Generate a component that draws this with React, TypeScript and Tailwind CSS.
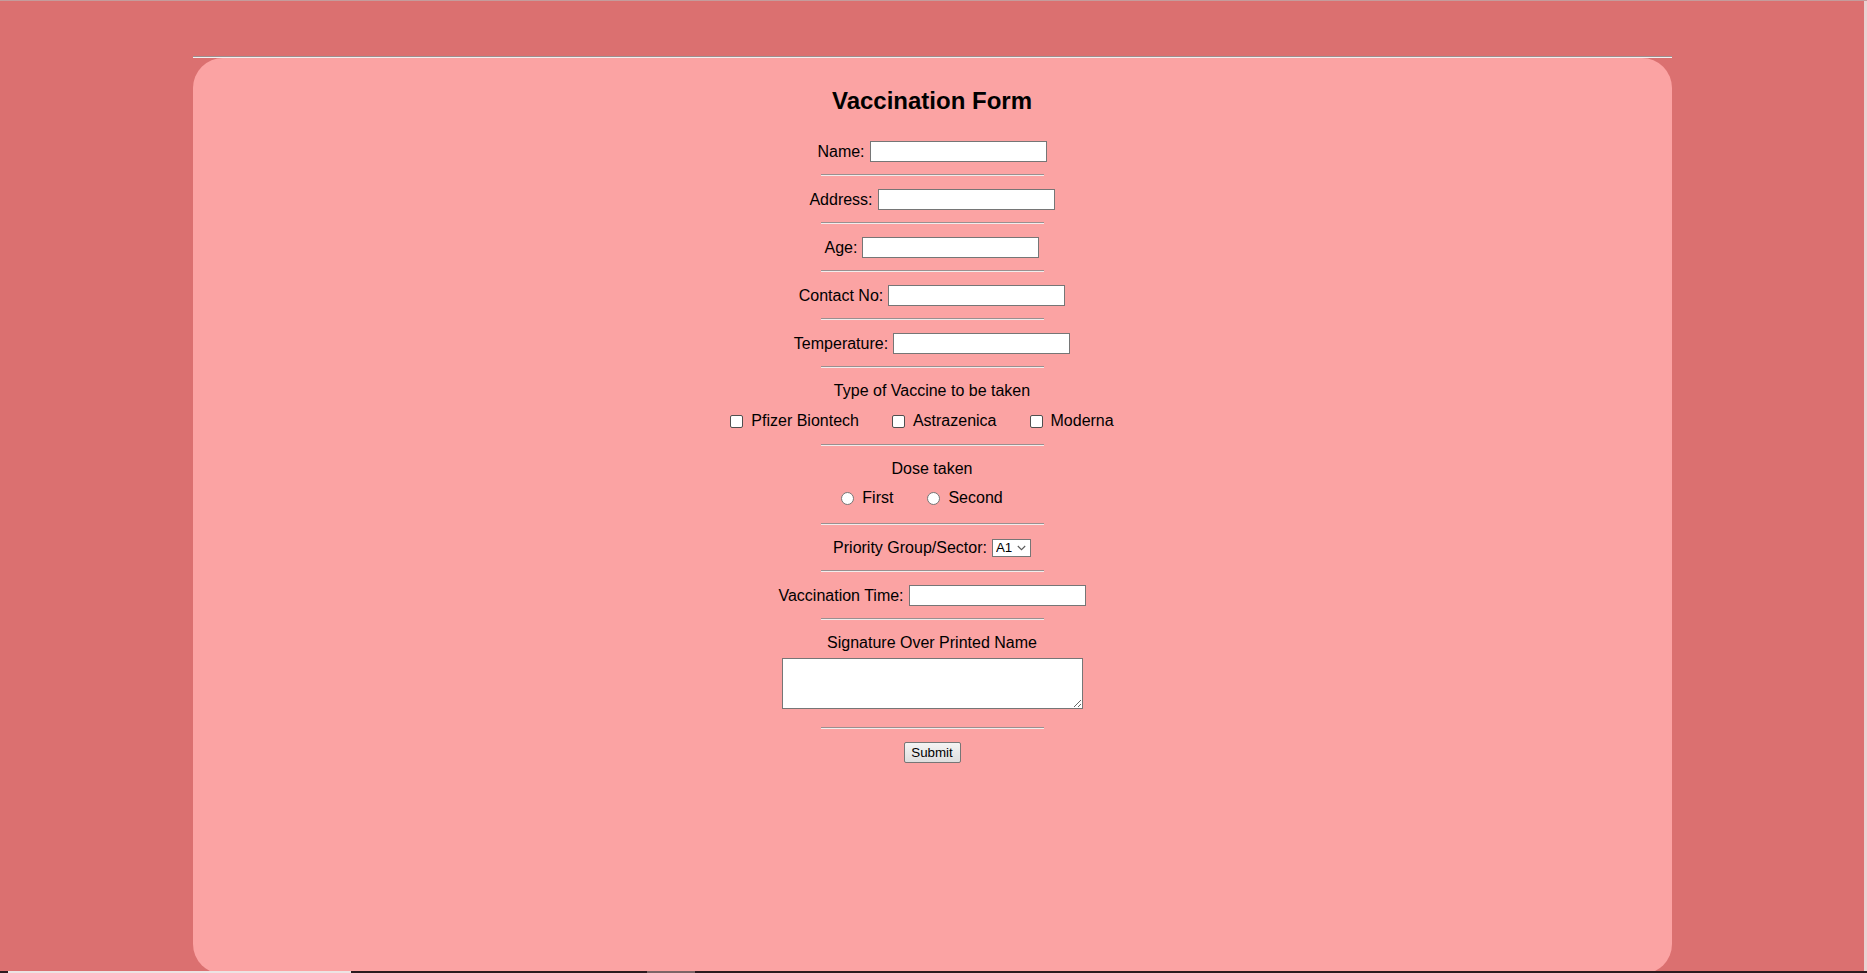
import React from 'react'

const labelRow = 'flex h-[21px] items-center gap-[5px] text-[16px] leading-[18px]'
const textInput = 'h-[21px] w-[177px] border border-[#767676] bg-white px-[2px] text-[13.33px] outline-none'
const divider = 'h-0 w-[223px] border-t border-b border-t-[#9a8f8f] border-b-[#f2ecec]'

function Field({ label, className = '' }: { label: string; className?: string }) {
    return (
        <div className={`${labelRow} ${className}`}>
            <span>{label}</span>
            <input type="text" className={textInput} />
        </div>
    )
}

function Check({ label, className = '' }: { label: string; className?: string }) {
    return (
        <label className={`flex items-center ${className}`}>
            <input
                type="checkbox"
                className="h-[13px] w-[13px] appearance-none rounded-[2px] border border-[#4f4f4f] bg-white"
            />
            <span className="ml-[8px]">{label}</span>
        </label>
    )
}

function Radio({ label, className = '' }: { label: string; className?: string }) {
    return (
        <label className={`flex items-center ${className}`}>
            <input
                type="radio"
                name="dose"
                className="h-[13px] w-[13px] appearance-none rounded-full border border-[#767676] bg-white"
            />
            <span className="ml-[8px]">{label}</span>
        </label>
    )
}

export default function App() {
    return (
        <div className="flex h-[973px] flex-col overflow-hidden bg-[#db7070] font-['Liberation_Sans',Arial,sans-serif] text-black">
            <div className="h-px bg-[#c49c9c]" />
            <div className="flex min-h-0 flex-1">
                <main className="min-w-0 flex-1 overflow-hidden">
                    <div className="mx-auto w-[1479px] pt-[55px]">
                        <div className="h-0 border-t border-b border-t-[#9e8f8f] border-b-[#f4f0f0]" />
                        <form
                            className="flex h-[916px] flex-col items-center rounded-[30px] bg-[#fba3a3] pt-[29px] text-[16px] leading-[18px]"
                            onSubmit={(e) => e.preventDefault()}
                        >
                            <h2 className="text-[24px] font-bold leading-[28px]">Vaccination Form</h2>

                            <Field label="Name:" className="mt-[26px]" />
                            <div className={`${divider} mt-[12px]`} />
                            <Field label="Address:" className="mt-[13px]" />
                            <div className={`${divider} mt-[12px]`} />
                            <Field label="Age:" className="mt-[13px]" />
                            <div className={`${divider} mt-[12px]`} />
                            <Field label="Contact No:" className="mt-[13px]" />
                            <div className={`${divider} mt-[12px]`} />
                            <Field label="Temperature:" className="mt-[13px]" />
                            <div className={`${divider} mt-[12px]`} />

                            <p className="mt-[14px]">Type of Vaccine to be taken</p>
                            <div className="mt-[12px] flex h-[18px] items-center pr-[20px]">
                                <Check label="Pfizer Biontech" />
                                <Check label="Astrazenica" className="ml-[33px]" />
                                <Check label="Moderna" className="ml-[33px]" />
                            </div>
                            <div className={`${divider} mt-[14px]`} />

                            <p className="mt-[14px]">Dose taken</p>
                            <div className="mt-[11px] flex h-[18px] items-center pr-[20px]">
                                <Radio label="First" />
                                <Radio label="Second" className="ml-[34px]" />
                            </div>
                            <div className={`${divider} mt-[16px]`} />

                            <div className="mt-[14px] flex h-[18px] items-center gap-[5px]">
                                <span>Priority Group/Sector:</span>
                                <div className="relative">
                                    <select className="block h-[18px] w-[39px] appearance-none border border-[#767676] bg-white pl-[3px] text-[13.33px] leading-[16px] outline-none">
                                        <option>A1</option>
                                        <option>A2</option>
                                        <option>A3</option>
                                    </select>
                                    <svg
                                        className="pointer-events-none absolute right-[5px] top-[6px]"
                                        width="9"
                                        height="6"
                                        viewBox="0 0 9 6"
                                        fill="none"
                                    >
                                        <path d="M0.8 1 L4.5 4.7 L8.2 1" stroke="#5a5a5a" strokeWidth="1.1" />
                                    </svg>
                                </div>
                            </div>
                            <div className={`${divider} mt-[13px]`} />

                            <Field label="Vaccination Time:" className="mt-[13px]" />
                            <div className={`${divider} mt-[12px]`} />

                            <p className="mt-[14px]">Signature Over Printed Name</p>
                            <textarea className="mt-[6px] h-[51px] w-[301px] border border-[#767676] bg-white text-[13.33px] outline-none" />
                            <div className={`${divider} mt-[18px]`} />

                            <button
                                type="submit"
                                className="mt-[13px] flex h-[21px] w-[57px] items-center justify-center rounded-[2px] border border-[#767676] bg-gradient-to-b from-[#f4f4f4] to-[#dedede] text-[13.33px] leading-[15px]"
                            >
                                Submit
                            </button>
                        </form>
                    </div>
                </main>
                <div className="w-[3px] bg-[#e9d3d3]" />
            </div>
            <div className="flex h-[2px]">
                <div className="w-[8px] bg-[#2c1a20]" />
                <div className="w-[343px] bg-[#ece4e4]" />
                <div className="w-[296px] bg-[#2c1a20]" />
                <div className="w-[48px] bg-[#7d6468]" />
                <div className="flex-1 bg-[#2c1a20]" />
            </div>
        </div>
    )
}
